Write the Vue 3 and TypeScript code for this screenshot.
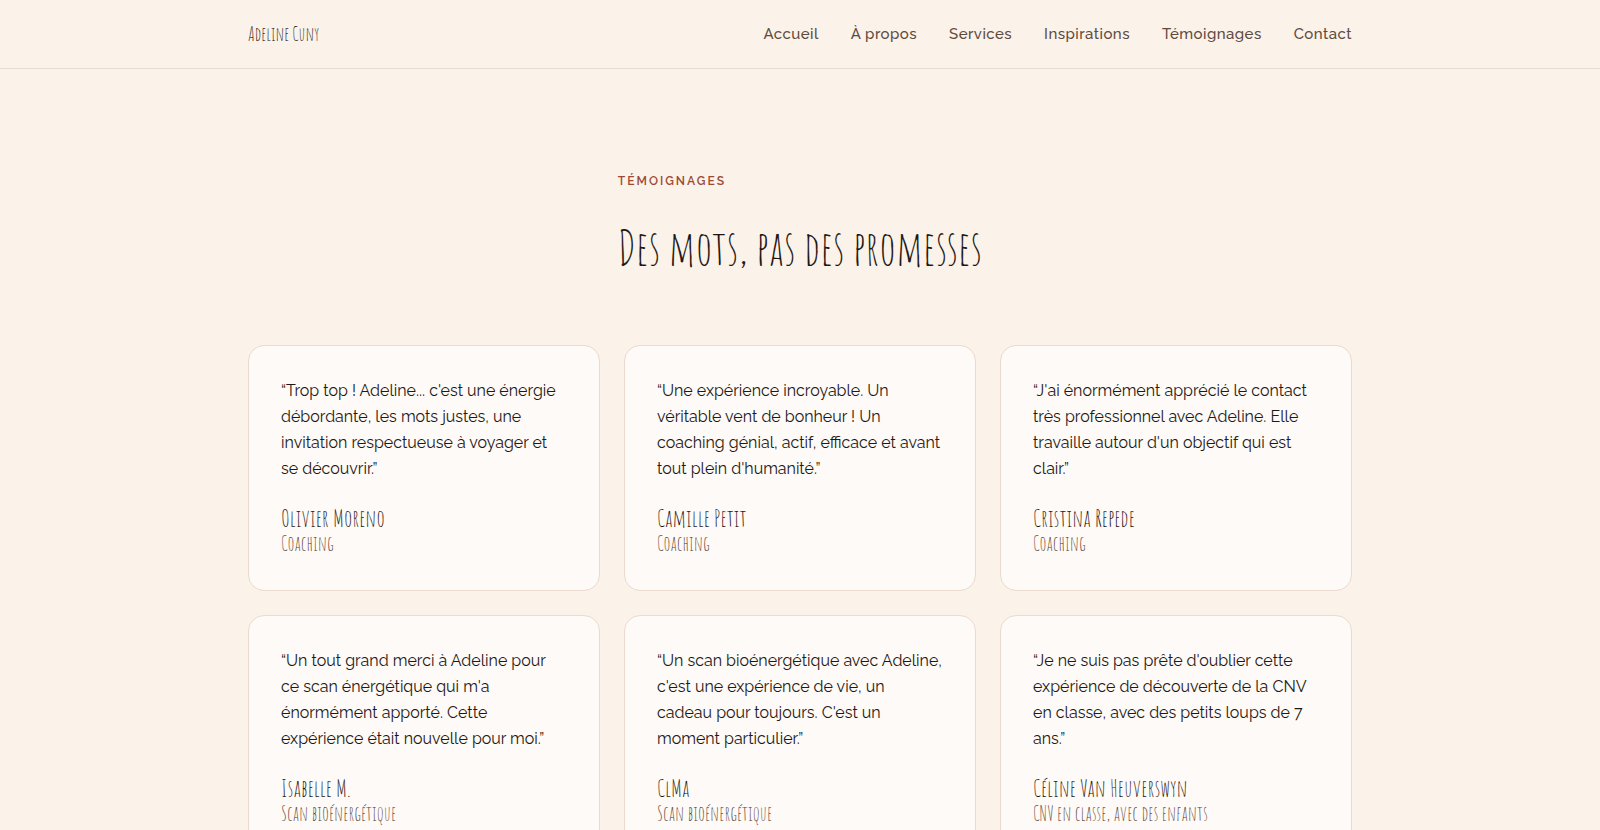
<script setup lang="ts">
interface NavLink {
  label: string
  href: string
}

interface Testimonial {
  quote: string
  author: string
  context: string
}

const links: NavLink[] = [
  { label: 'Accueil', href: '#accueil' },
  { label: 'À propos', href: '#a-propos' },
  { label: 'Services', href: '#services' },
  { label: 'Inspirations', href: '#inspirations' },
  { label: 'Témoignages', href: '#temoignages' },
  { label: 'Contact', href: '#contact' },
]

const testimonials: Testimonial[] = [
  {
    quote: "Trop top ! Adeline... c'est une énergie débordante, les mots justes, une invitation respectueuse à voyager et se découvrir.",
    author: 'Olivier Moreno',
    context: 'Coaching',
  },
  {
    quote: "Une expérience incroyable. Un véritable vent de bonheur ! Un coaching génial, actif, efficace et avant tout plein d'humanité.",
    author: 'Camille Petit',
    context: 'Coaching',
  },
  {
    quote: "J'ai énormément apprécié le contact très professionnel avec Adeline. Elle travaille autour d'un objectif qui est clair.",
    author: 'Cristina Repede',
    context: 'Coaching',
  },
  {
    quote: "Un tout grand merci à Adeline pour ce scan énergétique qui m'a énormément apporté. Cette expérience était nouvelle pour moi.",
    author: 'Isabelle M.',
    context: 'Scan bioénergétique',
  },
  {
    quote: "Un scan bioénergétique avec Adeline, c'est une expérience de vie, un cadeau pour toujours. C'est un moment particulier.",
    author: 'ClMa',
    context: 'Scan bioénergétique',
  },
  {
    quote: "Je ne suis pas prête d'oublier cette expérience de découverte de la CNV en classe, avec des petits loups de 7 ans.",
    author: 'Céline Van Heuverswyn',
    context: 'CNV en classe, avec des enfants',
  },
]
</script>

<template>
  <div class="page">
    <header class="site-header">
      <div class="container bar">
        <a class="brand" href="#accueil">Adeline Cuny</a>
        <nav class="nav" aria-label="Navigation principale">
          <a v-for="link in links" :key="link.href" class="nav-link" :href="link.href">{{ link.label }}</a>
        </nav>
      </div>
    </header>

    <main id="temoignages" class="container section">
      <div class="intro">
        <p class="kicker">Témoignages</p>
        <h1 class="title">Des mots, pas des promesses</h1>
      </div>

      <div class="grid">
        <figure v-for="item in testimonials" :key="item.author" class="card">
          <blockquote class="quote">“{{ item.quote }}”</blockquote>
          <figcaption class="caption">
            <span class="author">{{ item.author }}</span>
            <span class="context">{{ item.context }}</span>
          </figcaption>
        </figure>
      </div>
    </main>
  </div>
</template>

<style>
html,
body {
  margin: 0;
  background: #fbf2e9;
}

html {
  scrollbar-width: none;
}
</style>

<style scoped>
.page {
  min-height: 100vh;
  color: #1f1814;
  font-family: Raleway, "Open Sans", sans-serif;
  font-size: 16px;
  line-height: 26px;
}

.container {
  box-sizing: border-box;
  max-width: 1152px;
  margin: 0 auto;
  padding: 0 24px;
}

.site-header {
  border-bottom: 1px solid #e9ddd3;
}

.bar {
  display: flex;
  align-items: center;
  justify-content: space-between;
  min-height: 68px;
}

.brand {
  color: #1f1814;
  font-family: "Amatic SC", "Roboto Condensed", sans-serif;
  font-size: 19px;
  line-height: 26px;
  text-decoration: none;
}

.nav {
  display: flex;
  flex-wrap: wrap;
  gap: 32px;
}

.nav-link {
  color: #5e4b40;
  font-size: 15px;
  font-weight: 500;
  letter-spacing: 0.03em;
  text-decoration: none;
}

.section {
  padding-top: 96px;
  padding-bottom: 96px;
}

.intro {
  width: fit-content;
  margin: 0 auto 72px;
}

.kicker {
  margin: 0 0 24px;
  color: #9c4a36;
  font-size: 12px;
  font-weight: 600;
  line-height: 32px;
  letter-spacing: 2px;
  text-transform: uppercase;
}

.title {
  margin: 0;
  font-family: "Amatic SC", "Roboto Condensed", sans-serif;
  font-size: 48px;
  font-weight: 400;
  line-height: 52px;
}

.grid {
  display: grid;
  grid-template-columns: repeat(3, minmax(0, 1fr));
  gap: 24px;
}

.card {
  margin: 0;
  padding: 32px;
  border: 1px solid #ecdacf;
  border-radius: 16px;
  background: #fefaf7;
}

.quote {
  margin: 0 0 24px;
}

.caption {
  display: flex;
  flex-direction: column;
  font-family: "Amatic SC", "Roboto Condensed", sans-serif;
}

.author {
  font-size: 24px;
  line-height: 24px;
}

.context {
  color: #5e4b40;
  font-size: 20px;
  line-height: 28px;
}

@media (max-width: 900px) {
  .bar {
    flex-wrap: wrap;
  }

  .grid {
    grid-template-columns: minmax(0, 1fr);
  }
}
</style>
